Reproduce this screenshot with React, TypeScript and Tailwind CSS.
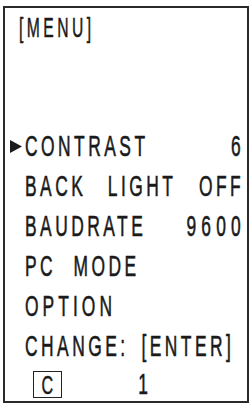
const font = "font-['Liberation_Sans',Arial,sans-serif]";

function Arrow() {
  return (
    <svg width="12" height="13" viewBox="0 0 12 13" className="block">
      <polygon points="0,0 12,6.5 0,13" fill="#1a1a1a" />
    </svg>
  );
}

function Row({ active, children }: { active?: boolean; children: React.ReactNode }) {
  return (
    <div className="flex h-[40px] items-center pl-[5px]">
      <div className="flex w-[15px] shrink-0 items-center">{active && <Arrow />}</div>
      <div className="flex w-[372px] shrink-0 origin-left scale-x-[0.58] items-center whitespace-nowrap text-[30px] leading-none tracking-[6px] [-webkit-text-stroke:0.6px_#1a1a1a]">
        {children}
      </div>
    </div>
  );
}

export default function App() {
  return (
    <div className={`h-[404px] w-[251px] bg-white text-[#1a1a1a] ${font}`}>
      <div className="h-[6px]" />
      <div className="ml-[3px] flex h-[397px] w-[246px] flex-col overflow-hidden border-2 border-[#2a2a2a]">
        <div className="h-[118px] shrink-0 pl-[14px] pt-[7px]">
          <div className="w-[200px] origin-left scale-x-[0.58] whitespace-nowrap text-[27px] leading-none tracking-[6px] [-webkit-text-stroke:0.5px_#1a1a1a]">
            [MENU]
          </div>
        </div>

        <Row active>
          <span>CONTRAST</span>
          <span className="ml-auto -mr-[6px]">6</span>
        </Row>
        <Row>
          <span>BACK</span>
          <span className="ml-[37px]">LIGHT</span>
          <span className="ml-auto -mr-[6px]">OFF</span>
        </Row>
        <Row>
          <span>BAUDRATE</span>
          <span className="ml-auto -mr-[9px] tracking-[9px]">9600</span>
        </Row>
        <Row>
          <span>PC</span>
          <span className="ml-[30px]">MODE</span>
        </Row>
        <Row>
          <span className="tracking-[7px]">OPTION</span>
        </Row>
        <Row>
          <span>CHANGE:</span>
          <span className="ml-[22px]">[ENTER]</span>
        </Row>

        <div className="mt-[5px] flex h-[27px] shrink-0 items-center pl-[28px]">
          <div className="flex h-[27px] w-[29px] items-center justify-center border-[1.5px] border-[#222]">
            <span className="inline-block scale-x-[0.62] text-[26px] leading-none [-webkit-text-stroke:0.5px_#1a1a1a]">C</span>
          </div>
          <span className="ml-[73px] inline-block scale-x-[0.6] text-[29px] leading-none [-webkit-text-stroke:0.6px_#1a1a1a]">1</span>
        </div>
      </div>
    </div>
  );
}
